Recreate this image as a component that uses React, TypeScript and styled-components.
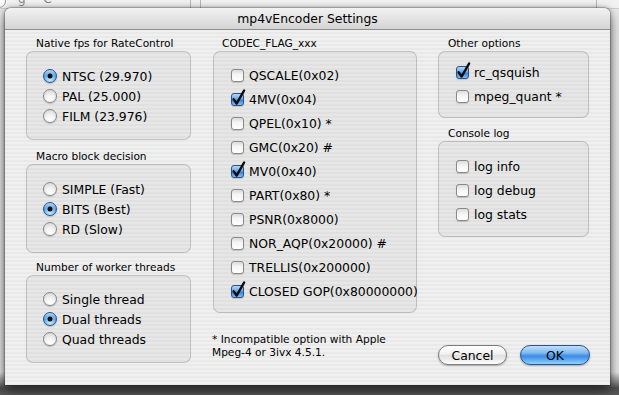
import React from "react";
import styled, { createGlobalStyle } from "styled-components";

const Global = createGlobalStyle`
  html, body { margin: 0; padding: 0; }
  body {
    width: 619px; height: 395px; overflow: hidden;
    font-family: "DejaVu Sans", "Lucida Grande", sans-serif;
    color: #000;
  }
`;

const Desktop = styled.div`
  position: relative;
  width: 619px;
  height: 395px;
  overflow: hidden;
  box-sizing: border-box;
  padding: 8px 9px 0 5px;
  background: linear-gradient(to bottom, #e9e9e9 0, #e9e9e9 372px, #8a8a8a 382px, #4e4e4e 388px, #5c5c5c 395px);
`;

const BackDeco = styled.div`
  position: absolute;
  left: 0; top: 0; right: 0; height: 8px;
  background: #f2f2f2;
  border-bottom: 1px solid #d0d0d0;
`;

const BackText = styled.span`
  position: absolute;
  left: 18px; top: -8px;
  font-size: 12px;
  color: #8a8a8a;
`;

const BackLine = styled.span<{ $x: number }>`
  position: absolute;
  top: 0; bottom: 0;
  left: ${p => p.$x}px;
  width: 1px;
  background: #b8b8b8;
`;

const BackRadio = styled.span`
  position: absolute;
  left: -8px; top: -6px;
  width: 12px; height: 12px;
  border-radius: 50%;
  border: 1px solid #999;
  background: #fafafa;
`;

const Window = styled.div`
  position: relative;
  width: 605px;
  height: 377px;
  display: flex;
  flex-direction: column;
  border-radius: 6px 6px 0 0;
  box-shadow: 0 0 0 1px rgba(0,0,0,0.18), 0 6px 14px rgba(0,0,0,0.55), 0 0 5px rgba(0,0,0,0.35);
  overflow: hidden;
`;

const TitleBar = styled.div`
  height: 21px;
  flex: none;
  display: flex;
  align-items: center;
  justify-content: center;
  font-size: 12.4px;
  background: linear-gradient(to bottom, #f2f2f2 0%, #e4e4e4 50%, #d4d4d4 100%);
  border-bottom: 1px solid #8e8e8e;
`;

const Content = styled.div`
  flex: 1;
  display: flex;
  gap: 0;
  padding: 6px 21px 20px 21px;
  background: repeating-linear-gradient(to bottom, #f0f0f0 0, #f0f0f0 2px, #e9e9e9 2px, #e9e9e9 4px);
`;

const Column = styled.div<{ $w: number; $ml?: number }>`
  width: ${p => p.$w}px;
  margin-left: ${p => p.$ml ?? 0}px;
  display: flex;
  flex-direction: column;
  flex: none;
`;

const GroupLabel = styled.div<{ $mt?: number; $indent?: number }>`
  font-size: 10.6px;
  line-height: 14px;
  height: 14px;
  padding-left: ${p => p.$indent ?? 10}px;
  margin-top: ${p => p.$mt ?? 0}px;
  margin-bottom: 1px;
  white-space: nowrap;
`;

const GroupBox = styled.div<{ $pt: number; $pb: number; $pl: number }>`
  border: 1px solid rgba(0,0,0,0.17);
  border-radius: 7px;
  background: rgba(0,0,0,0.035);
  padding: ${p => p.$pt}px 0 ${p => p.$pb}px ${p => p.$pl}px;
  display: flex;
  flex-direction: column;
`;

const Row = styled.div<{ $h: number }>`
  height: ${p => p.$h}px;
  display: flex;
  align-items: center;
  gap: 5px;
  font-size: 12.4px;
  white-space: nowrap;
`;

const Radio = styled.span<{ $on?: boolean }>`
  position: relative;
  flex: none;
  width: 14px;
  height: 14px;
  box-sizing: border-box;
  border-radius: 50%;
  border: 1px solid ${p => (p.$on ? "#2f4f86" : "#888")};
  background: ${p =>
    p.$on
      ? "radial-gradient(circle at 50% 85%, #c7ecff 0, #7cc0f7 40%, rgba(80,150,230,0) 70%), linear-gradient(to bottom, #b4d7f7 0%, #5d9fe6 45%, #2f78d4 55%, #5aa8ee 100%)"
      : "radial-gradient(circle at 50% 80%, #ffffff 0, #f3f3f3 40%, #cfcfcf 100%)"};
  box-shadow: 0 1px 1px rgba(0,0,0,0.18);
  &::after {
    content: "";
    display: ${p => (p.$on ? "block" : "none")};
    position: absolute;
    left: 50%;
    top: 50%;
    width: 5px;
    height: 5px;
    border-radius: 50%;
    background: #111;
    transform: translate(-50%, -50%);
  }
`;

const CheckBox = styled.span<{ $on?: boolean }>`
  position: relative;
  flex: none;
  width: 13px;
  height: 13px;
  box-sizing: border-box;
  border-radius: 3px;
  border: 1px solid ${p => (p.$on ? "#2f4f86" : "#888")};
  background: ${p =>
    p.$on
      ? "linear-gradient(to bottom, #b4d7f7 0%, #6aa9ea 45%, #3a82d8 55%, #78bdf5 100%)"
      : "linear-gradient(to bottom, #dcdcdc 0%, #f4f4f4 40%, #ffffff 100%)"};
  box-shadow: 0 1px 1px rgba(0,0,0,0.15);
`;

const CheckMark = styled.svg`
  position: absolute;
  left: -1px;
  top: -1px;
  width: 13px;
  height: 13px;
  overflow: visible;
`;

const Footnote = styled.div`
  margin-top: 20px;
  margin-left: -1px;
  font-size: 10.6px;
  line-height: 12.5px;
`;

const ButtonRow = styled.div`
  margin-top: auto;
  margin-right: -1px;
  display: flex;
  justify-content: flex-end;
  gap: 13px;
`;

const PushButton = styled.button<{ $w: number; $default?: boolean }>`
  width: ${p => p.$w}px;
  height: 20px;
  box-sizing: border-box;
  border-radius: 10px;
  padding: 0;
  font-family: inherit;
  font-size: 12.4px;
  color: #000;
  border: 1px solid ${p => (p.$default ? "#2c528f" : "#7a7a7a")};
  background: ${p =>
    p.$default
      ? "linear-gradient(to bottom, #c0e0fb 0%, #7bb8f1 40%, #4d96e6 50%, #3f8fe8 60%, #8fd3ff 100%)"
      : "linear-gradient(to bottom, #ffffff 0%, #f1f1f1 45%, #e0e0e0 52%, #ececec 75%, #ffffff 100%)"};
  box-shadow: 0 1px 2px rgba(0,0,0,0.3);
`;

function RadioItem({ label, on, h = 20 }: { label: string; on?: boolean; h?: number }) {
  return (
    <Row $h={h}>
      <Radio $on={on} />
      <span>{label}</span>
    </Row>
  );
}

function CheckItem({ label, on, h = 24 }: { label: string; on?: boolean; h?: number }) {
  return (
    <Row $h={h}>
      <CheckBox $on={on}>
        {on && (
          <CheckMark viewBox="0 0 13 13">
            <path
              d="M2.6 6.2 L5.6 10.6 L13.2 -2.6"
              fill="none"
              stroke="#0a0a0a"
              strokeWidth="2.3"
              strokeLinecap="round"
              strokeLinejoin="round"
            />
          </CheckMark>
        )}
      </CheckBox>
      <span>{label}</span>
    </Row>
  );
}

const codecFlags: [string, boolean][] = [
  ["QSCALE(0x02)", false],
  ["4MV(0x04)", true],
  ["QPEL(0x10) *", false],
  ["GMC(0x20) #", false],
  ["MV0(0x40)", true],
  ["PART(0x80) *", false],
  ["PSNR(0x8000)", false],
  ["NOR_AQP(0x20000) #", false],
  ["TRELLIS(0x200000)", false],
  ["CLOSED GOP(0x80000000)", true],
];

export default function App() {
  return (
    <>
      <Global />
      <Desktop>
        <BackDeco>
          <BackRadio />
          <BackText>g ^ C</BackText>
          <BackLine $x={190} />
          <BackLine $x={200} />
          <BackLine $x={596} />
        </BackDeco>
        <Window>
          <TitleBar>mp4vEncoder Settings</TitleBar>
          <Content>
            <Column $w={165}>
              <GroupLabel>Native fps for RateControl</GroupLabel>
              <GroupBox $pt={14} $pb={13} $pl={16}>
                <RadioItem label="NTSC (29.970)" on />
                <RadioItem label="PAL (25.000)" />
                <RadioItem label="FILM (23.976)" />
              </GroupBox>
              <GroupLabel $mt={9}>Macro block decision</GroupLabel>
              <GroupBox $pt={14} $pb={13} $pl={16}>
                <RadioItem label="SIMPLE (Fast)" />
                <RadioItem label="BITS (Best)" on />
                <RadioItem label="RD (Slow)" />
              </GroupBox>
              <GroupLabel $mt={7}>Number of worker threads</GroupLabel>
              <GroupBox $pt={13} $pb={13} $pl={16}>
                <RadioItem label="Single thread" />
                <RadioItem label="Dual threads" on />
                <RadioItem label="Quad threads" />
              </GroupBox>
            </Column>
            <Column $w={204} $ml={22}>
              <GroupLabel $indent={9}>CODEC_FLAG_xxx</GroupLabel>
              <GroupBox $pt={11} $pb={9} $pl={17}>
                {codecFlags.map(([l, on]) => (
                  <CheckItem key={l} label={l} on={on} />
                ))}
              </GroupBox>
              <Footnote>
                * Incompatible option with Apple
                <br />
                Mpeg-4 or 3ivx 4.5.1.
              </Footnote>
            </Column>
            <Column $w={151} $ml={21}>
              <GroupLabel>Other options</GroupLabel>
              <GroupBox $pt={8} $pb={9} $pl={17}>
                <CheckItem label="rc_qsquish" on />
                <CheckItem label="mpeg_quant *" />
              </GroupBox>
              <GroupLabel $mt={8}>Console log</GroupLabel>
              <GroupBox $pt={12} $pb={10} $pl={17}>
                <CheckItem label="log info" />
                <CheckItem label="log debug" />
                <CheckItem label="log stats" />
              </GroupBox>
              <ButtonRow>
                <PushButton $w={69}>Cancel</PushButton>
                <PushButton $w={70} $default>
                  OK
                </PushButton>
              </ButtonRow>
            </Column>
          </Content>
        </Window>
      </Desktop>
    </>
  );
}
